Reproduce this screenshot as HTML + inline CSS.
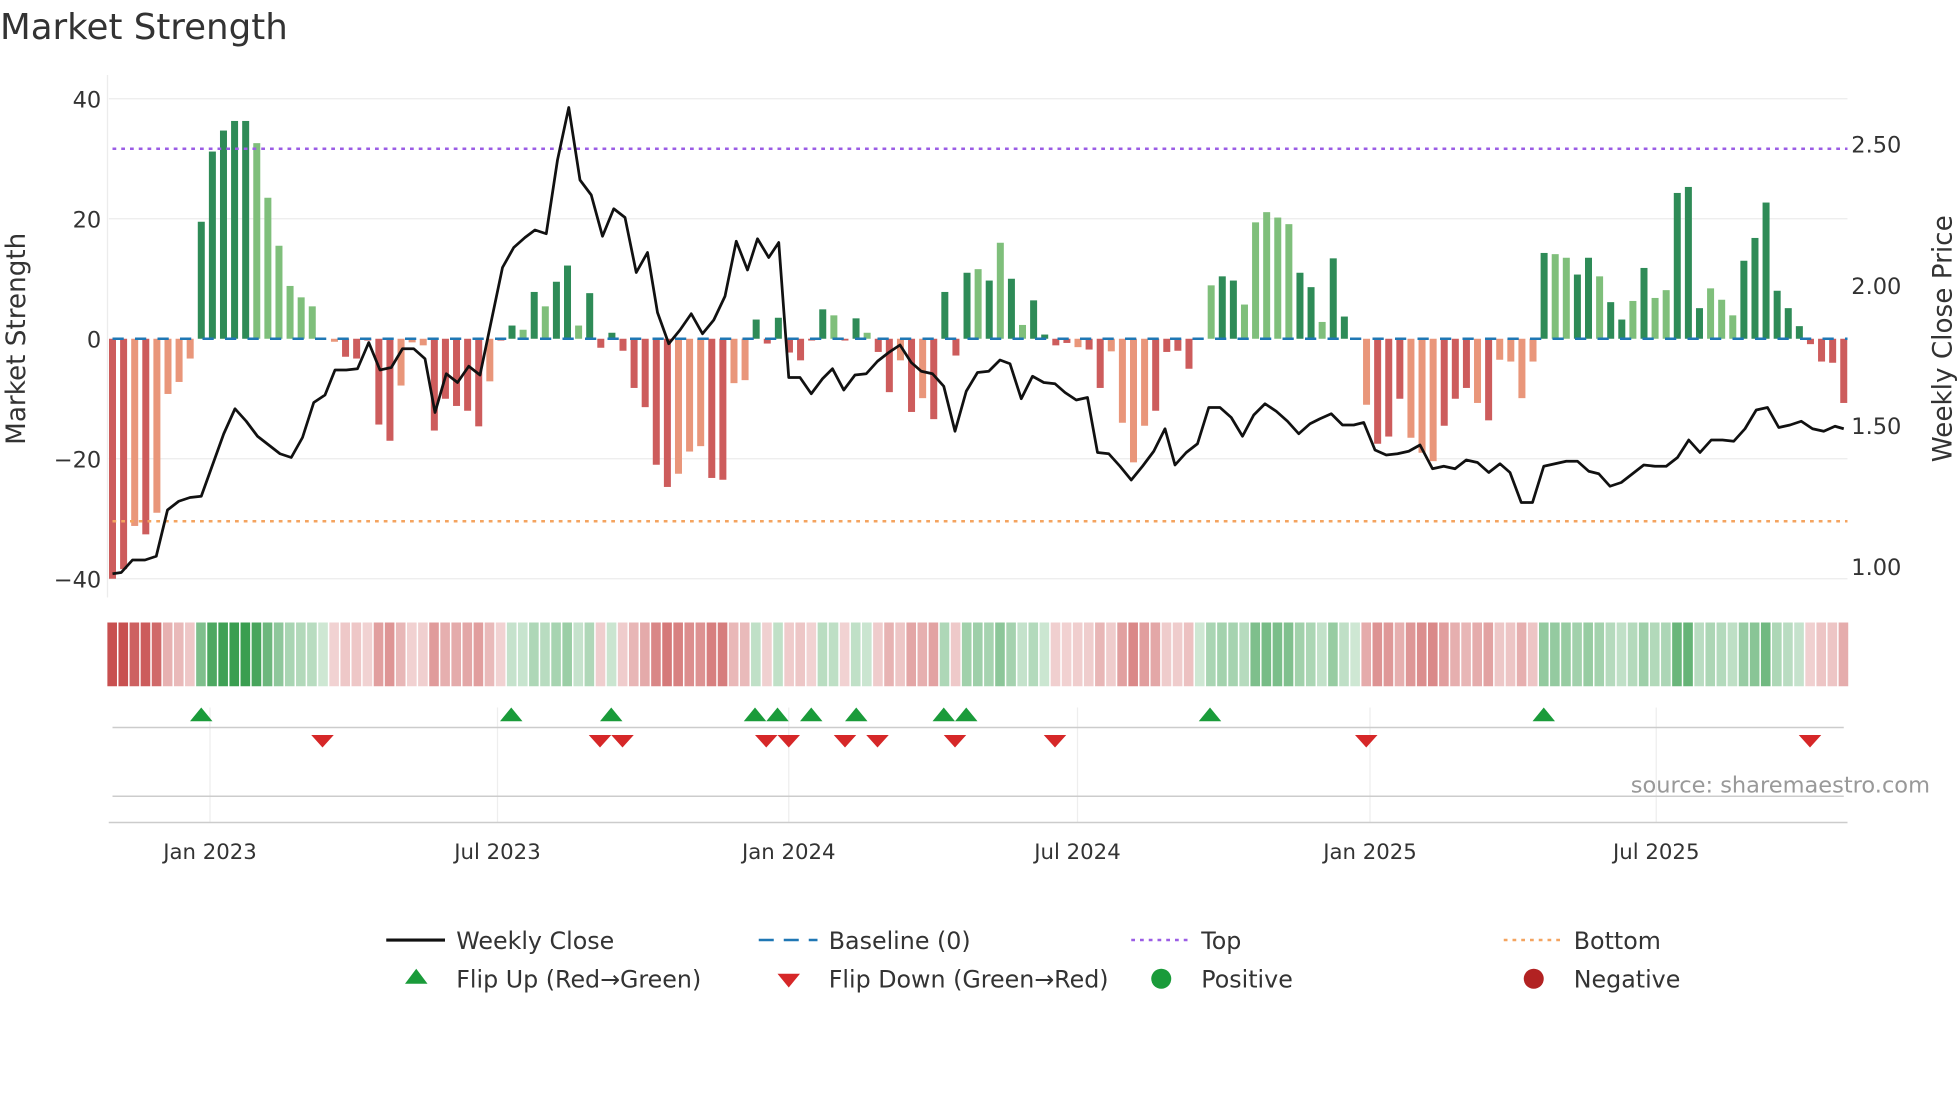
<!DOCTYPE html>
<html><head><meta charset="utf-8">
<style>
html,body{margin:0;padding:0;background:#fff;width:1960px;height:1102px;overflow:hidden}
svg{display:block}
text{font-family:"DejaVu Sans","Liberation Sans",sans-serif;fill:#333}
</style></head><body>
<svg id="s" width="1960" height="1102" viewBox="0 0 1568 881.6" xmlns="http://www.w3.org/2000/svg">
<text x="0" y="31" font-size="28.5">Market Strength</text>
<g stroke="#ececec" stroke-width="1">
<line x1="87" y1="79" x2="1478" y2="79"/><line x1="87" y1="175" x2="1478" y2="175"/>
<line x1="87" y1="367" x2="1478" y2="367"/><line x1="87" y1="463" x2="1478" y2="463"/>
<line x1="86" y1="60" x2="86" y2="478"/>
</g>
<g font-size="18" text-anchor="end">
<text x="81" y="86">40</text><text x="81" y="182">20</text><text x="81" y="278">0</text>
<text x="81" y="374">−20</text><text x="81" y="470">−40</text>
</g>
<g font-size="18">
<text x="1481" y="122">2.50</text><text x="1481" y="235">2.00</text>
<text x="1481" y="347">1.50</text><text x="1481" y="460">1.00</text>
</g>
<text font-size="21" text-anchor="middle" transform="translate(20,271) rotate(-90)">Market Strength</text>
<text font-size="21" text-anchor="middle" transform="translate(1561,271) rotate(-90)">Weekly Close Price</text>
<g id="bars"></g>
<line x1="90" y1="271" x2="1478" y2="271" stroke="#1f77b4" stroke-width="2" stroke-dasharray="9,9"/>
<line x1="90" y1="119" x2="1478" y2="119" stroke="#9b5de5" stroke-width="2" stroke-dasharray="3,4"/>
<line x1="90" y1="417" x2="1478" y2="417" stroke="#f4a460" stroke-width="2" stroke-dasharray="3,4"/>
<polyline id="price" fill="none" stroke="#111" stroke-width="2.2" stroke-linejoin="round"/>
<g id="strip"></g>
<g stroke="#eee" stroke-width="1">
<line x1="168" y1="566" x2="168" y2="658"/><line x1="398" y1="566" x2="398" y2="658"/>
<line x1="631" y1="566" x2="631" y2="658"/><line x1="862" y1="566" x2="862" y2="658"/>
<line x1="1096" y1="566" x2="1096" y2="658"/><line x1="1325" y1="566" x2="1325" y2="658"/>
</g>
<line x1="90" y1="582" x2="1475" y2="582" stroke="#ccc" stroke-width="1.2"/>
<line x1="90" y1="637" x2="1475" y2="637" stroke="#ccc" stroke-width="1.2"/>
<line x1="87" y1="658" x2="1478" y2="658" stroke="#ccc" stroke-width="1.2"/>
<g id="marks"></g>
<text x="1544" y="634" font-size="18" text-anchor="end" style="fill:#999">source: sharemaestro.com</text>
<g font-size="17" text-anchor="middle">
<text x="168" y="687">Jan 2023</text><text x="398" y="687">Jul 2023</text>
<text x="631" y="687">Jan 2024</text><text x="862" y="687">Jul 2024</text>
<text x="1096" y="687">Jan 2025</text><text x="1325" y="687">Jul 2025</text>
</g>
<g font-size="19">
<line x1="309" y1="752" x2="356" y2="752" stroke="#111" stroke-width="2.5"/>
<text x="365" y="759">Weekly Close</text>
<line x1="607" y1="752" x2="654" y2="752" stroke="#1f77b4" stroke-width="2" stroke-dasharray="12,8"/>
<text x="663" y="759">Baseline (0)</text>
<line x1="905" y1="752" x2="952" y2="752" stroke="#9b5de5" stroke-width="2" stroke-dasharray="3,4"/>
<text x="961" y="759">Top</text>
<line x1="1203" y1="752" x2="1250" y2="752" stroke="#f4a460" stroke-width="2" stroke-dasharray="3,4"/>
<text x="1259" y="759">Bottom</text>
<polygon points="333,775 342,787 324,787" fill="#1a9b3a"/>
<text x="365" y="790">Flip Up (Red→Green)</text>
<polygon points="622,779 640,779 631,790" fill="#d62728"/>
<text x="663" y="790">Flip Down (Green→Red)</text>
<circle cx="929" cy="783" r="8" fill="#1a9b3a"/>
<text x="961" y="790">Positive</text>
<circle cx="1227" cy="783" r="8" fill="#b22222"/>
<text x="1259" y="790">Negative</text>
</g>
</svg>
<script>
var v=[-40,-38.4,-31.2,-32.6,-29,-9.2,-7.2,-3.3,19.5,31.2,34.7,36.3,36.3,32.6,23.5,15.5,8.8,6.9,5.4,0,-0.5,-3,-3.3,-0.3,-14.3,-17,-7.8,-0.6,-1.1,-15.3,-10,-11.2,-12,-14.6,-7.1,-0.3,2.2,1.5,7.8,5.4,9.5,12.2,2.2,7.6,-1.5,1,-2,-8.2,-11.4,-21,-24.7,-22.5,-18.8,-17.9,-23.2,-23.5,-7.4,-6.9,3.2,-0.8,3.5,-2.3,-3.6,-0.3,4.9,3.9,-0.3,3.4,1,-2.2,-8.9,-3.6,-12.2,-9.9,-13.4,7.8,-2.8,11,11.6,9.7,16,10,2.3,6.4,0.7,-1.1,-0.7,-1.4,-1.8,-8.2,-2.1,-14,-20.6,-14.5,-12,-2.2,-2,-5,0,8.9,10.4,9.7,5.7,19.4,21.1,20.2,19.1,11,8.6,2.8,13.4,3.7,0,-11,-17.5,-16.3,-10,-16.5,-19,-20.4,-14.5,-10,-8.2,-10.7,-13.6,-3.5,-3.8,-9.9,-3.8,14.3,14.1,13.5,10.7,13.5,10.4,6.1,3.2,6.3,11.8,6.8,8.1,24.3,25.3,5.1,8.4,6.5,3.9,13,16.8,22.7,8,5.1,2.1,-0.9,-3.8,-4,-10.7];
var d="DDLDLLLLDDDDDLLLLLL.LDD.DDLLLDDDDDL.DLDLDDLDDDDDDDDLLLDDLLD.DDD.DL.DLDDLDLDDDDLDLDLDDDDLDDLLLLD.DDLLDDLLLLLD.LDDLLDDDLLLDDDLDLLLLDLLDDLDDLDLLDDDLLLDDDD";
var ns="http://www.w3.org/2000/svg",B=document.getElementById('bars'),S=document.getElementById('strip');
function el(t,a,p){var e=document.createElementNS(ns,t);for(var k in a)e.setAttribute(k,a[k]);p.appendChild(e);return e;}
var st=(1475-90)/(v.length-1);
for(var i=0;i<v.length;i++){var x=90+i*st,val=v[i],h=Math.abs(val)*4.8,dk=d[i]!=='L';
 var c=val>=0?(dk?'#2e8b57':'#7fbf7b'):(dk?'#cd5c5c':'#e9967a');
 if(h>0.3)el('rect',{x:x-2.8,y:val>=0?271-h:271,width:5.6,height:h,fill:c},B);
 var a=0.25+0.75*Math.min(Math.abs(val)/36,1);
 el('rect',{x:x-4.1,y:498,width:st-1.2,height:51,fill:val>=0?'#3a9e50':'#c85050','fill-opacity':a},S);}
var p=[90,459,97,458,106,448,116,448,125,445,134,408,143,401,152,398,161,397,170,372,179,347,188,327,197,337,206,349,215,356,224,363,233,366,242,350,251,322,260,316,268,296,277,296,286,295,295,274,304,296,313,294,322,279,331,279,340,287,348,330,357,299,366,306,375,293,384,300,393,257,402,214,411,198,420,190,428,184,437,187,446,128,455,86,464,144,473,156,482,189,491,167,500,174,509,218,518,202,526,250,535,275,544,264,553,251,562,267,571,256,580,237,589,193,598,216,606,191,615,206,623,194,631,302,640,302,649,315,658,303,666,295,675,312,684,300,693,299,702,289,711,282,720,276,729,290,737,297,746,299,755,309,764,345,773,313,782,298,791,297,800,288,808,291,817,319,826,301,835,306,844,307,852,314,861,320,870,318,878,362,887,363,896,373,905,384,914,373,923,361,932,343,940,372,949,362,958,355,967,326,976,326,985,334,994,349,1003,332,1012,323,1021,329,1030,337,1039,347,1048,339,1056,335,1065,331,1074,340,1083,340,1091,338,1100,360,1109,364,1118,363,1127,361,1136,356,1146,375,1155,373,1164,375,1173,368,1182,370,1191,378,1200,371,1208,378,1217,402,1226,402,1235,373,1244,371,1253,369,1262,369,1271,377,1279,379,1288,389,1297,386,1306,379,1315,372,1324,373,1333,373,1342,366,1351,352,1360,362,1369,352,1378,352,1387,353,1396,343,1405,328,1414,326,1423,342,1432,340,1441,337,1450,343,1459,345,1468,341,1475,343];
var s="";for(var j=0;j<p.length;j+=2)s+=p[j]+","+p[j+1]+" ";document.getElementById('price').setAttribute('points',s);
var M=document.getElementById('marks');
[161,409,489,604,622,649,685,755,773,968,1235].forEach(function(x){el('polygon',{points:(x)+",566 "+(x+9)+",577 "+(x-9)+",577",fill:'#1a9b3a'},M);});
[258,480,498,613,631,676,702,764,844,1093,1448].forEach(function(x){el('polygon',{points:(x-9)+",588 "+(x+9)+",588 "+x+",598",fill:'#d62728'},M);});
</script>
</body></html>
